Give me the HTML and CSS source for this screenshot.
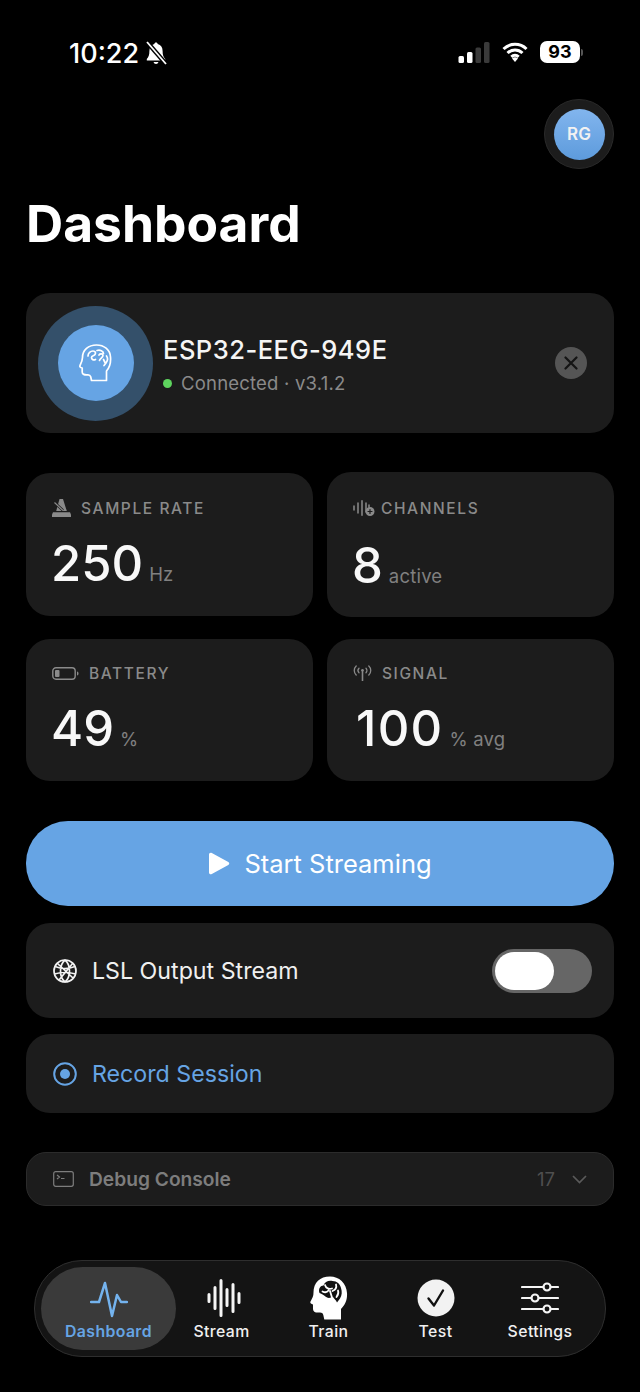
FILE: index.html
```html
<!DOCTYPE html>
<html lang="en">
<head>
    <meta charset="UTF-8">
    <meta name="viewport" content="width=device-width, initial-scale=1.0">
    <title>Dashboard</title>
    <link rel="stylesheet" href="styles.css">
</head>
<body>

    <!-- Status bar -->
    <div class="status-bar">
        <div class="status-left">
            <span class="clock">10:22</span>
            <svg class="bell" viewBox="0 0 24 24" width="24" height="24">
                <path d="M12 1.5c-1 0-1.6.7-1.7 1.6C7 4 5.4 6.6 5.4 10c0 4-.8 6-2.6 8v1.5h18.4V18c-1.800-2-2.600-4-2.600-8 0-3.400-1.600-6-4.900-6.900-.1-.9-.7-1.600-1.700-1.600z" fill="#fff"/>
                <path d="M9.500 21a2.600 2.600 0 0 0 5 0z" fill="#fff"/>
                <path d="M3 1l19 22" stroke="#000" stroke-width="4.500"/>
                <path d="M3 1l19 22" stroke="#fff" stroke-width="1.800"/>
            </svg>
        </div>
        <div class="status-right">
            <svg class="signal" viewBox="0 0 32 21" width="32" height="21">
                <rect x="0.500" y="14" width="5.500" height="7" rx="1.500" fill="#fff"/>
                <rect x="9" y="10" width="5.500" height="11" rx="1.500" fill="#fff"/>
                <rect x="17.500" y="5.500" width="5.500" height="15.500" rx="1.500" fill="#3a3a3a"/>
                <rect x="26" y="0" width="5.500" height="21" rx="1.500" fill="#3a3a3a"/>
            </svg>
            <svg class="wifi" viewBox="0 0 26 20" width="26" height="20">
                <path d="M1.500 7a16.500 16.500 0 0 1 23 0M5.500 11a11 11 0 0 1 15 0M9.300 14.800a5.500 5.500 0 0 1 7.400 0" fill="none" stroke="#fff" stroke-width="3"/>
                <path d="M13 20l-3-3.400a4.300 4.300 0 0 1 6 0z" fill="#fff"/>
            </svg>
            <span class="battery-pill">93</span>
            <span class="battery-nub"></span>
        </div>
    </div>

    <div class="avatar-row">
        <div class="avatar-ring"><div class="avatar">RG</div></div>
    </div>

    <h1>Dashboard</h1>

    <!-- Connected device -->
    <div class="card device-card">
        <div class="halo">
            <div class="halo-inner">
                <svg viewBox="0 0 33 38" width="33" height="38" fill="none" stroke="#fff" stroke-width="1.700" stroke-linejoin="round" stroke-linecap="round">
                    <path d="M27.500 36.500V27c2.800-3 4.500-8 4-14C31 5.500 25 1 17.500 1 9.500 1 3.500 6 3.500 13.500c0 3-1 5-2.500 8-.5 1.200.2 2 2.200 2.500v4c0 2.200 2 3.200 5.800 2.800 1.300 0 2.300.7 2.700 2l.8 3.700z"/>
                    <path d="M9 12c0-3 2.500-5 5-5s3 2 2 3.500-3.500 1-3.500 3 2 3 4 2M18 6.500c3-1 6.500.5 6.500 3M20 11c1-1.500 4-1.500 4 .5s-3 3-3.500 5M27.500 12c1.500 2 1 5-.5 7l-2 2.500M24.500 15.500l1.500 3"/>
                </svg>
            </div>
        </div>
        <div class="device-info">
            <div class="device-name">ESP32-EEG-949E</div>
            <div class="device-status"><span class="dot"></span>Connected · v3.1.2</div>
        </div>
        <div class="close-btn">
            <svg viewBox="0 0 14 14" width="14" height="14"><path d="M1.500 1.500l11 11M12.500 1.500l-11 11" stroke="#141414" stroke-width="2.200" stroke-linecap="round"/></svg>
        </div>
    </div>

    <!-- Stats -->
    <div class="stats">
        <div class="card stat stat-inset">
            <div class="stat-label gap-10">
                <svg viewBox="0 0 19 18" width="19" height="18" fill="#8a8a8a">
                    <path d="M7.500 0h3.500l3.800 12H4.200z"/>
                    <path d="M1 13.200h17l1 2.300V18H0v-2.500z"/>
                    <path d="M2.500 3.500l8.500 8" stroke="#1c1c1c" stroke-width="2.600"/>
                    <path d="M2.500 3.500l8.500 8" stroke="#8a8a8a" stroke-width="1.200"/>
                </svg>
                SAMPLE RATE
            </div>
            <div class="stat-value">250<span class="unit">Hz</span></div>
        </div>
        <div class="card stat">
            <div class="stat-label gap-6">
                <svg viewBox="0 0 22 16" width="22" height="16" fill="none" stroke="#8a8a8a" stroke-width="1.500" stroke-linecap="round">
                    <path d="M1 6v4M5 3v10M9 0.800v14.400M13 3v9M16 5v2"/>
                    <circle cx="17" cy="11.500" r="4.500" fill="#8a8a8a" stroke="none"/>
                    <path d="M17 9.500v4M15 11.500h4" stroke="#1c1c1c" stroke-width="1.200"/>
                </svg>
                CHANNELS
            </div>
            <div class="stat-value stat-value-low">8<span class="unit">active</span></div>
        </div>
        <div class="card stat stat-upper">
            <div class="stat-label gap-10">
                <svg viewBox="0 0 27 13" width="27" height="13" fill="none">
                    <rect x="0.800" y="0.800" width="22.400" height="11.400" rx="3.200" stroke="#8a8a8a" stroke-width="1.400"/>
                    <rect x="3" y="3" width="4.500" height="7" rx="1" fill="#8a8a8a"/>
                    <path d="M25 4.500c1 .4 1.500 1.100 1.500 2s-.5 1.600-1.500 2z" fill="#8a8a8a"/>
                </svg>
                BATTERY
            </div>
            <div class="stat-value">49<span class="unit">%</span></div>
        </div>
        <div class="card stat stat-upper">
            <div class="stat-label gap-10">
                <svg viewBox="0 0 19 16" width="19" height="16" fill="none" stroke="#8a8a8a" stroke-width="1.300" stroke-linecap="round">
                    <path d="M3.200 1C.6 3.500.6 7.500 3.200 10M15.800 1c2.600 2.500 2.600 6.500 0 9M6 3.300c-1.200 1.200-1.200 3.200 0 4.400M13 3.300c1.200 1.200 1.200 3.200 0 4.400"/>
                    <path d="M9.500 6v9.500" stroke-width="1.600"/>
                    <circle cx="9.500" cy="5.300" r="1.300" fill="#8a8a8a" stroke="none"/>
                </svg>
                SIGNAL
            </div>
            <div class="stat-value stat-value-signal">100<span class="unit">% avg</span></div>
        </div>
    </div>

    <button class="start-btn">
        <svg viewBox="0 0 22 23" width="22" height="23"><path d="M1 2.500C1 1 2.500.2 3.800 1l16.500 9c1.300.7 1.300 2.300 0 3L3.800 22c-1.300.8-2.800 0-2.800-1.500z" fill="#fff"/></svg>
        Start Streaming
    </button>

    <!-- Options -->
    <div class="card option lsl-row">
        <svg viewBox="0 0 24 24" width="24" height="24" fill="none" stroke="#f2f2f2" stroke-width="1.700">
            <circle cx="12" cy="12" r="11"/>
            <path d="M12 1c-6 5-6 17 0 22M12 1c6 5 6 17 0 22M2 7.500c6 2.500 14 2.500 20 0M1.500 15c6-2 15-2 21 0M4 4l16 15M20 4L6 21"/>
        </svg>
        <span class="option-label">LSL Output Stream</span>
        <div class="toggle"><div class="thumb"></div></div>
    </div>

    <div class="card option record-row">
        <svg viewBox="0 0 24 24" width="24" height="24" fill="none">
            <circle cx="12" cy="12" r="10.800" stroke="#66a4e4" stroke-width="2"/>
            <circle cx="12" cy="12" r="5" fill="#66a4e4"/>
        </svg>
        <span class="option-label record-label">Record Session</span>
    </div>

    <div class="card debug-row">
        <svg viewBox="0 0 21 16" width="21" height="16" fill="none" stroke="#7d7d7d" stroke-width="1.200">
            <rect x="0.700" y="0.700" width="19.600" height="14.600" rx="2"/>
            <path d="M4 4l2.500 2L4 8M8 7.500h3.500"/>
        </svg>
        <span class="debug-label">Debug Console</span>
        <span class="debug-count">17</span>
        <svg class="debug-chevron" viewBox="0 0 15 9" width="15" height="9" fill="none"><path d="M1 1l6.500 6.500L14 1" stroke="#5a5a5a" stroke-width="1.700"/></svg>
    </div>

    <!-- Bottom tabs -->
    <nav class="tabbar">
        <div class="tab tab-active">
            <svg viewBox="0 0 38 44" width="38" height="44" fill="none" stroke="#74b3ee" stroke-width="2.500" stroke-linejoin="round" stroke-linecap="round">
                <path d="M1 26h8L15 7l7 33 5-21 4 7h6"/>
            </svg>
            <span>Dashboard</span>
        </div>
        <div class="tab">
            <svg viewBox="0 0 38 44" width="38" height="44" fill="none" stroke="#f5f5f5" stroke-width="3" stroke-linecap="round">
                <path d="M6 18.500v7M12 11.500v21M18 4.500v35M24 13.500v16M30 8.500v27M36 17.500v9"/>
            </svg>
            <span>Stream</span>
        </div>
        <div class="tab">
            <svg viewBox="0 0 38 44" width="38" height="44">
                <path d="M31 43.500V33c4-4 6.500-9 6-16C36.500 7 29 .5 20 .5 10 .5 3.500 6.500 3.500 16.500c0 3.500-1 5.500-3 9-.6 1.400.2 2.400 2.500 3v4.500c0 2.800 2.500 4 7 3.500 1.700 0 2.800.8 3.300 2.400l1 4.600z" fill="#fff"/>
                <path d="M9.500 17c-1.500-4 1-7.500 4-7.500 1-3.500 5-5.500 9-4.500 4.500 0 7.500 3 8.500 7 1.200 3.500 1 7.500-1 10.500l-3 4c-1-2.500-3-3.500-4-5.500l-4 1c-3.500-.2-4.500-3.500-9.500-5z" fill="#111"/>
                <path d="M15 9c1 3.500 4 4.500 7 3.500M20 15l2 6.500M26 8.500c1 3.500-1 5.500-3.500 6.500M28 14.500c1 2.500 0 4.500-1.500 6.500M12.500 15.500c2 1 4.500 1 6-1" fill="none" stroke="#fff" stroke-width="1.800" stroke-linecap="round"/>
            </svg>
            <span>Train</span>
        </div>
        <div class="tab">
            <svg viewBox="0 0 38 38" width="38" height="38">
                <circle cx="19" cy="19" r="18.500" fill="#f2f2f2"/>
                <path d="M11.500 19.500l5.500 7L26 11.500" fill="none" stroke="#111" stroke-width="2.400" stroke-linecap="round" stroke-linejoin="round"/>
            </svg>
            <span>Test</span>
        </div>
        <div class="tab tab-last">
            <svg viewBox="0 0 38 36" width="38" height="36" fill="none" stroke="#f5f5f5" stroke-width="2.200" stroke-linecap="round">
                <path d="M1 7h21M30 7h7M1 18h9M18 18h19M1 29h21M30 29h7"/>
                <circle cx="26" cy="7" r="3.500"/>
                <circle cx="14" cy="18" r="3.500"/>
                <circle cx="26" cy="29" r="3.500"/>
            </svg>
            <span>Settings</span>
        </div>
    </nav>

</body>
</html>
```

FILE: styles.css
```css
* {
    box-sizing: border-box;
}

html, body {
    margin: 0;
    height: 1392px;
    overflow: hidden;
}

body {
    font-family: Inter, "Liberation Sans", sans-serif;
    background-color: #000;
    color: #f5f5f5;
    padding: 0 26px;
}

/* Status bar */
.status-bar {
    height: 66px;
    padding-top: 37px;
    display: flex;
    justify-content: space-between;
    align-items: flex-start;
}

.status-left {
    display: flex;
    align-items: center;
    margin-left: 43px;
    height: 32px;
}

.clock {
    font-size: 27px;
    font-weight: 500;
    color: #fff;
}

.bell {
    margin-left: 5px;
}

.status-right {
    display: flex;
    align-items: center;
    height: 32px;
    margin: -1px 31px 0 0;
}

.wifi {
    margin-left: 12px;
}

.battery-pill {
    margin-left: 12px;
    width: 40px;
    height: 22px;
    border-radius: 7px;
    background-color: #fff;
    color: #000;
    font-size: 18px;
    font-weight: 700;
    line-height: 22px;
    text-align: center;
}

.battery-nub {
    width: 2px;
    height: 7px;
    margin-left: 1px;
    border-radius: 0 2px 2px 0;
    background-color: #555;
}

.avatar-row {
    display: flex;
    justify-content: flex-end;
    padding-top: 33px;
}

.avatar-ring {
    width: 70px;
    height: 70px;
    border-radius: 50%;
    background-color: #1c1c1c;
    border: 1px solid #2a2a2a;
    display: flex;
    align-items: center;
    justify-content: center;
}

.avatar {
    width: 51px;
    height: 51px;
    border-radius: 50%;
    background: linear-gradient(#82b5ee, #5d9bdc);
    color: #f2f2f2;
    font-size: 17px;
    font-weight: 600;
    display: flex;
    align-items: center;
    justify-content: center;
}

h1 {
    margin: 24px 0 0;
    font-size: 51.5px;
    font-weight: 700;
    line-height: 60px;
    color: #fff;
}

.card {
    background-color: #1c1c1c;
    border-radius: 24px;
}

/* Device card */
.device-card {
    margin-top: 40px;
    height: 140px;
    padding: 0 27px 0 12px;
    display: flex;
    align-items: center;
}

.halo {
    width: 115px;
    height: 115px;
    border-radius: 50%;
    background-color: #34506a;
    display: flex;
    align-items: center;
    justify-content: center;
    flex-shrink: 0;
}

.halo-inner {
    width: 76px;
    height: 76px;
    border-radius: 50%;
    background-color: #66a4e4;
    display: flex;
    align-items: center;
    justify-content: center;
}

.device-info {
    margin-left: 10px;
    flex: 1;
    padding-top: 2px;
}

.device-name {
    font-size: 25.5px;
    font-weight: 500;
    color: #f5f5f5;
    letter-spacing: 0.5px;
}

.device-status {
    margin-top: 7px;
    font-size: 18.5px;
    color: #8a8a8a;
    letter-spacing: 0.2px;
    display: flex;
    align-items: center;
}

.dot {
    width: 9px;
    height: 9px;
    border-radius: 50%;
    background-color: #5ed45e;
    margin-right: 9px;
}

.close-btn {
    width: 32px;
    height: 32px;
    border-radius: 50%;
    background-color: #555;
    display: flex;
    align-items: center;
    justify-content: center;
}

/* Stats */
.stats {
    margin-top: 39px;
    display: grid;
    grid-template-columns: 287px 287px;
    grid-template-rows: 145px 142px;
    column-gap: 14px;
    row-gap: 22px;
}

.stat {
    padding: 26px 26px 0;
}

.stat-inset {
    margin: 1px 0;
    padding-top: 25px;
}

.stat-upper {
    padding-top: 24px;
}

.stat-label {
    display: flex;
    align-items: center;
    height: 20px;
    font-size: 15.5px;
    font-weight: 500;
    letter-spacing: 1.6px;
    color: #8a8a8a;
}

.gap-10 {
    gap: 10px;
}

.gap-6 {
    gap: 6px;
}

.stat-value {
    margin-top: 16px;
    margin-left: -1px;
    font-size: 49px;
    font-weight: 500;
    line-height: 60px;
    color: #f8f8f8;
}

.stat-value-low {
    margin-top: 18px;
}

.stat-value-signal {
    margin-left: 3px;
    letter-spacing: 1.3px;
}

.unit {
    margin-left: 6px;
    font-size: 18.5px;
    font-weight: 400;
    color: #808080;
    letter-spacing: 0.2px;
}

/* Start button */
.start-btn {
    margin-top: 40px;
    width: 100%;
    height: 85px;
    border: none;
    border-radius: 42px;
    background-color: #66a4e4;
    color: #fff;
    font-family: inherit;
    font-size: 25.500px;
    font-weight: 400;
    display: flex;
    align-items: center;
    justify-content: center;
    gap: 14px;
}

/* Options */
.option {
    display: flex;
    align-items: center;
    padding: 0 22px 0 27px;
}

.option-label {
    margin-left: 15px;
    font-size: 23.2px;
    color: #f0f0f0;
    flex: 1;
    padding-top: 1px;
}

.lsl-row {
    margin-top: 17px;
    height: 95px;
}

.record-row {
    margin-top: 16px;
    height: 79px;
}

.record-label {
    color: #66a4e4;
}

.toggle {
    width: 100px;
    height: 44px;
    padding: 3px;
    border-radius: 22px;
    background-color: #666;
}

.thumb {
    width: 59px;
    height: 38px;
    border-radius: 19px;
    background-color: #fff;
}

/* Debug console */
.debug-row {
    margin-top: 39px;
    height: 54px;
    border-radius: 20px;
    border: 1px solid #2b2b2b;
    padding: 0 26px;
    display: flex;
    align-items: center;
}

.debug-label {
    margin-left: 15px;
    font-size: 19.2px;
    font-weight: 600;
    color: #7d7d7d;
    flex: 1;
}

.debug-count {
    font-size: 18.500px;
    color: #4f4f4f;
}

.debug-chevron {
    margin-left: 17px;
}

/* Tab bar */
.tabbar {
    margin: 54px 8px 0;
    height: 97px;
    padding: 6px;
    border-radius: 48px;
    background-color: #141414;
    border: 1px solid #2e2e2e;
    display: flex;
}

.tab {
    width: 107px;
    display: flex;
    flex-direction: column;
    align-items: center;
    font-size: 15.8px;
    font-weight: 500;
    letter-spacing: 0.4px;
    color: #f0f0f0;
}

.tab svg {
    height: 44px;
    margin-top: 9px;
}

.tab span {
    margin-top: 2px;
}

.tab-active {
    width: 135px;
    margin-right: -8px;
    border-radius: 42px;
    background-color: #3a3a3a;
    color: #66a4e4;
    font-weight: 600;
}

.tab-last {
    width: 102px;
}
```
